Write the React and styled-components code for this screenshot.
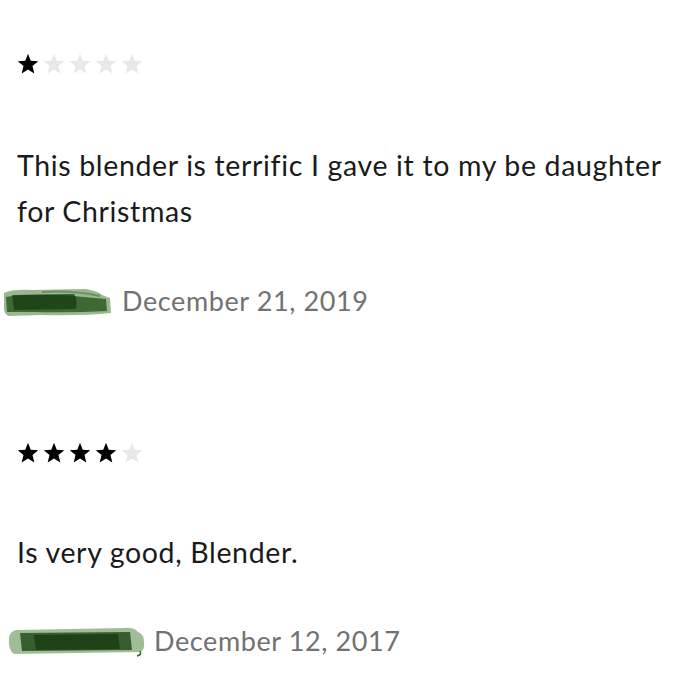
import React from "react";
import styled, { createGlobalStyle } from "styled-components";

const Global = createGlobalStyle`
  html, body { margin: 0; padding: 0; background: #fff; }
  body { font-family: Lato, "Open Sans", sans-serif; }
`;

const Page = styled.div`
  width: 700px;
  height: 700px;
  overflow: hidden;
  background: #fff;
  padding: 53px 0 0 17px;
  box-sizing: border-box;
`;

const Review = styled.section`
  display: flex;
  flex-direction: column;
  margin-bottom: ${(p) => p.$gap || 0}px;
`;

const Stars = styled.div`
  display: flex;
  gap: 4px;
  height: 22px;
`;

const Body = styled.p`
  margin: ${(p) => p.$top}px 0 0 0;
  font-size: 28.5px;
  line-height: 46px;
  color: #1a1a1a;
  letter-spacing: 0.65px;
`;

const Meta = styled.div`
  display: flex;
  align-items: center;
  margin-top: ${(p) => p.$top}px;
  margin-left: ${(p) => p.$offset}px;
  gap: ${(p) => p.$gap}px;
`;

const DateText = styled.span`
  font-size: 27px;
  line-height: 34px;
  color: #707174;
  letter-spacing: 0.6px;
`;

const StarIcon = ({ on }) => (
  <svg width="22" height="22" viewBox="0 0 24 24">
    <polygon
      points="12,0.8 15,8.4 23.2,8.9 16.9,14.1 18.9,22.4 12,17.9 5.1,22.4 7.1,14.1 0.8,8.9 9,8.4"
      fill={on ? "#000" : "#e7e8e9"}
    />
  </svg>
);

const Rating = ({ value }) => (
  <Stars>
    {[0, 1, 2, 3, 4].map((i) => (
      <StarIcon key={i} on={i < value} />
    ))}
  </Stars>
);

const BlobOne = () => (
  <svg width="110" height="34" viewBox="0 0 110 34">
    <path d="M2 9 Q10 5 30 6 L84 5 Q96 7 100 11 L108 14 L109 29 Q80 32 40 31 L6 32 Q1 29 2 21 Z" fill="#6f9a60" opacity="0.7" />
    <path d="M4 13 Q20 10 60 11 L104 15 L105 27 Q70 29 30 28 L5 28 Z" fill="#2f5a22" opacity="0.85" />
    <path d="M10 11 L72 10 Q76 15 74 25 L12 26 Z" fill="#163a10" opacity="0.75" />
    <path d="M40 8 Q70 6 98 12" stroke="#4a7a3a" strokeWidth="2" fill="none" opacity="0.6" />
  </svg>
);

const BlobTwo = () => (
  <svg width="142" height="34" viewBox="0 0 142 34">
    <path d="M10 6 L118 4 Q128 3 132 8 Q138 10 138 18 Q139 26 134 28 L8 30 Q2 26 3 14 Q4 7 10 6 Z" fill="#6f9a60" opacity="0.65" />
    <path d="M14 9 L124 8 L126 26 L16 27 Z" fill="#244d1a" opacity="0.85" />
    <path d="M28 11 L112 10 L114 25 L30 26 Z" fill="#102e0a" opacity="0.6" />
    <path d="M134 27 Q136 31 131 32" stroke="#355f2a" strokeWidth="1.5" fill="none" />
  </svg>
);

export default function App() {
  return (
    <>
      <Global />
      <Page>
        <Review $gap={124}>
          <Rating value={1} />
          <Body $top={67}>
            This blender is terrific I gave it to my be daughter
            <br />
            for Christmas
          </Body>
          <Meta $top={50} $offset={-15} $gap={10}>
            <BlobOne />
            <DateText>December 21, 2019</DateText>
          </Meta>
        </Review>
        <Review>
          <Rating value={4} />
          <Body $top={65}>Is very good, Blender.</Body>
          <Meta $top={49} $offset={-11} $gap={6}>
            <BlobTwo />
            <DateText>December 12, 2017</DateText>
          </Meta>
        </Review>
      </Page>
    </>
  );
}
